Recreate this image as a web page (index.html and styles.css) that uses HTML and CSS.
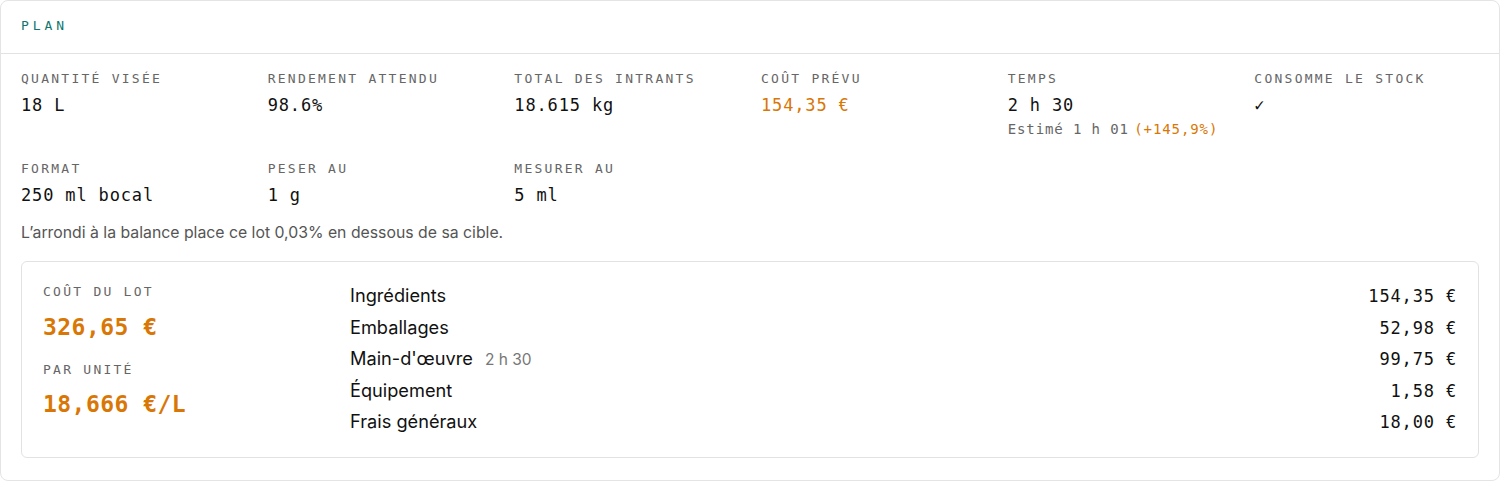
FILE: index.html
```html
<!DOCTYPE html>
<html lang="fr">
<head>
<meta charset="utf-8">
<title>Plan</title>
<link rel="stylesheet" href="styles.css">
</head>
<body>
<section class="card">
  <header class="card-head">
    <h2 class="eyebrow">Plan</h2>
  </header>
  <div class="card-body">
    <div class="stats">
      <div class="stat">
        <div class="label">Quantité visée</div>
        <div class="value">18 L</div>
      </div>
      <div class="stat">
        <div class="label">Rendement attendu</div>
        <div class="value">98.6%</div>
      </div>
      <div class="stat">
        <div class="label">Total des intrants</div>
        <div class="value">18.615 kg</div>
      </div>
      <div class="stat">
        <div class="label">Coût prévu</div>
        <div class="value accent">154,35 €</div>
      </div>
      <div class="stat">
        <div class="label">Temps</div>
        <div class="value">2 h 30</div>
        <div class="sub">Estimé 1 h 01<span class="delta accent"> (+145,9%)</span></div>
      </div>
      <div class="stat">
        <div class="label">Consomme le stock</div>
        <div class="value">✓</div>
      </div>
      <div class="stat">
        <div class="label">Format</div>
        <div class="value">250 ml bocal</div>
      </div>
      <div class="stat">
        <div class="label">Peser au</div>
        <div class="value">1 g</div>
      </div>
      <div class="stat">
        <div class="label">Mesurer au</div>
        <div class="value">5 ml</div>
      </div>
    </div>
    <p class="note">L’arrondi à la balance place ce lot 0,03% en dessous de sa cible.</p>
    <div class="cost">
      <div class="cost-summary">
        <div class="label">Coût du lot</div>
        <div class="big accent">326,65 €</div>
        <div class="label label-gap">Par unité</div>
        <div class="big accent big-last">18,666 €/L</div>
      </div>
      <ul class="cost-lines">
        <li class="line"><span class="line-name">Ingrédients</span><span class="line-amt">154,35 €</span></li>
        <li class="line"><span class="line-name">Emballages</span><span class="line-amt">52,98 €</span></li>
        <li class="line"><span class="line-name">Main-d'œuvre <span class="line-meta">2 h 30</span></span><span class="line-amt">99,75 €</span></li>
        <li class="line"><span class="line-name">Équipement</span><span class="line-amt">1,58 €</span></li>
        <li class="line"><span class="line-name">Frais généraux</span><span class="line-amt">18,00 €</span></li>
      </ul>
    </div>
  </div>
</section>
</body>
</html>
```

FILE: styles.css
```css
* { box-sizing: border-box; }

body {
  margin: 0;
  background: #ffffff;
  font-family: "Inter", "Noto Sans", sans-serif;
  color: #111111;
}

.card {
  width: 1500px;
  height: 481px;
  border: 1px solid #e4e4e4;
  border-radius: 8px;
  background: #ffffff;
}

.card-head {
  height: 53px;
  padding: 0 20px 2px;
  display: flex;
  align-items: center;
  border-bottom: 1px solid #e2e2e2;
}

.eyebrow {
  margin: 0;
  font-family: "DejaVu Sans Mono", "Liberation Mono", monospace;
  font-size: 13px;
  font-weight: 500;
  letter-spacing: 0.3em;
  text-transform: uppercase;
  color: #0f766e;
  line-height: 16px;
}

.card-body {
  padding: 17px 20px 21px;
}

.stats {
  display: grid;
  grid-template-columns: repeat(6, 1fr);
  column-gap: 22px;
  row-gap: 22px;
}

.label {
  font-family: "DejaVu Sans Mono", "Liberation Mono", monospace;
  font-size: 13px;
  line-height: 16px;
  letter-spacing: 2.25px;
  text-transform: uppercase;
  color: #666666;
  white-space: nowrap;
}

.value {
  margin-top: 6px;
  font-family: "DejaVu Sans Mono", "Liberation Mono", monospace;
  font-size: 17px;
  line-height: 24px;
  letter-spacing: 0.05em;
  color: #111111;
}

.sub {
  margin-top: 2px;
  font-family: "DejaVu Sans Mono", "Liberation Mono", monospace;
  font-size: 14px;
  line-height: 20px;
  letter-spacing: 0.9px;
  color: #666666;
}

.delta { margin-left: -4px; }

.accent { color: #d97706; }

.note {
  margin: 16px 0 18px;
  font-size: 15.8px;
  line-height: 20px;
  color: #555555;
}

.cost {
  display: grid;
  grid-template-columns: 307px 1fr;
  padding: 18px 21px 19px 21px;
  border: 1px solid #e2e2e2;
  border-radius: 6px;
}

.cost-summary { padding-top: 4px; }

.big {
  margin-top: 12px;
  font-family: "DejaVu Sans Mono", "Liberation Mono", monospace;
  font-size: 23px;
  font-weight: 700;
  line-height: 30px;
  letter-spacing: 0.02em;
}

.label-gap { margin-top: 20px; }
.big-last { margin-top: 11px; }

.cost-lines {
  list-style: none;
  margin: 0;
  padding: 0;
}

.line {
  display: flex;
  justify-content: space-between;
  align-items: baseline;
  height: 31.5px;
  line-height: 31.5px;
}

.line-name {
  font-size: 18.2px;
  color: #111111;
}

.line-meta {
  margin-left: 7px;
  font-size: 15.5px;
  color: #777777;
}

.line-amt {
  font-family: "DejaVu Sans Mono", "Liberation Mono", monospace;
  font-size: 17px;
  letter-spacing: 0.05em;
  color: #111111;
}
```
